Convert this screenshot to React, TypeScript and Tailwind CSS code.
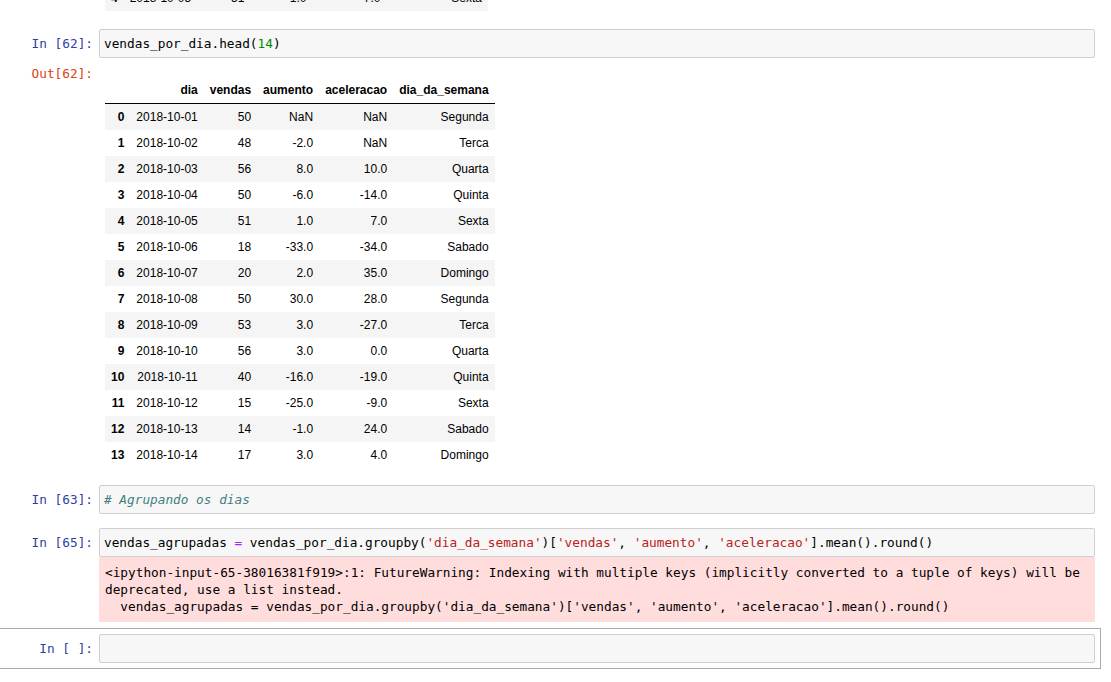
type Row = [number, string, number, string, string, string]

const rows: Row[] = [
  [0, "2018-10-01", 50, "NaN", "NaN", "Segunda"],
  [1, "2018-10-02", 48, "-2.0", "NaN", "Terca"],
  [2, "2018-10-03", 56, "8.0", "10.0", "Quarta"],
  [3, "2018-10-04", 50, "-6.0", "-14.0", "Quinta"],
  [4, "2018-10-05", 51, "1.0", "7.0", "Sexta"],
  [5, "2018-10-06", 18, "-33.0", "-34.0", "Sabado"],
  [6, "2018-10-07", 20, "2.0", "35.0", "Domingo"],
  [7, "2018-10-08", 50, "30.0", "28.0", "Segunda"],
  [8, "2018-10-09", 53, "3.0", "-27.0", "Terca"],
  [9, "2018-10-10", 56, "3.0", "0.0", "Quarta"],
  [10, "2018-10-11", 40, "-16.0", "-19.0", "Quinta"],
  [11, "2018-10-12", 15, "-25.0", "-9.0", "Sexta"],
  [12, "2018-10-13", 14, "-1.0", "24.0", "Sabado"],
  [13, "2018-10-14", 17, "3.0", "4.0", "Domingo"],
]

const cols = ["dia", "vendas", "aumento", "aceleracao", "dia_da_semana"]

const mono = "font-['DejaVu_Sans_Mono',monospace] text-[12.75px] leading-[17px]"

function DataFrame({ data }: { data: Row[] }) {
  return (
    <table className="border-collapse font-['Liberation_Sans',Arial,sans-serif] text-[12px] leading-[14px] text-black">
      <thead className="border-b border-black">
        <tr className="text-right">
          <th className="px-[6px] py-[6px]"></th>
          {cols.map((c) => (
            <th key={c} className="px-[6px] py-[6px] font-bold">{c}</th>
          ))}
        </tr>
      </thead>
      <tbody>
        {data.map((r) => (
          <tr key={r[0]} className="odd:bg-[#f5f5f5]">
            <th className="px-[6px] py-[6px] text-right font-bold">{r[0]}</th>
            {r.slice(1).map((v, i) => (
              <td key={i} className="px-[6px] py-[6px] text-right">{v}</td>
            ))}
          </tr>
        ))}
      </tbody>
    </table>
  )
}

function Prompt({ label, out }: { label: string; out?: boolean }) {
  return (
    <div className={`w-[99px] shrink-0 pr-[6px] text-right ${mono} ${out ? "text-[#D84315]" : "text-[#303F9F]"}`}>
      {label}
    </div>
  )
}

function InputBox({ children }: { children?: React.ReactNode }) {
  return (
    <div className={`flex-1 h-[29px] rounded-[2px] border border-[#cfcfcf] bg-[#f7f7f7] px-[4px] py-[5px] whitespace-pre text-black ${mono}`}>
      {children}
    </div>
  )
}

const S = ({ c }: { c: string }) => <span className="text-[#BA2121]">{c}</span>
const Op = ({ c }: { c: string }) => <span className="text-[#AA22FF]">{c}</span>

export default function App() {
  return (
    <div className="w-[1111px] h-[682px] overflow-hidden bg-white">
      {/* tail of the previous cell's output, scrolled mostly out of view */}
      <div className="flex h-[11px] flex-col items-start justify-end overflow-hidden pl-[105px]">
        <DataFrame data={rows.slice(0, 5)} />
      </div>

      {/* In [62] */}
      <div className="mt-[18px] mr-[16px] flex">
        <div className="pt-[6px]"><Prompt label="In [62]:" /></div>
        <InputBox>
          vendas_por_dia.head(<span className="text-[#008800]">14</span>)
        </InputBox>
      </div>
      <div className="mr-[16px] flex">
        <div className="pt-[7px]"><Prompt label="Out[62]:" out /></div>
        <div className="pl-[6px] pt-[19px]">
          <DataFrame data={rows} />
        </div>
      </div>

      {/* In [63] */}
      <div className="mt-[17px] mr-[16px] flex">
        <div className="pt-[6px]"><Prompt label="In [63]:" /></div>
        <InputBox>
          <span className="italic text-[#408080]"># Agrupando os dias</span>
        </InputBox>
      </div>

      {/* In [65] */}
      <div className="mt-[14px] mr-[16px] flex">
        <div className="pt-[6px]"><Prompt label="In [65]:" /></div>
        <InputBox>
          vendas_agrupadas <Op c="=" /> vendas_por_dia.groupby(<S c="'dia_da_semana'" />)[<S c="'vendas'" />, <S c="'aumento'" />, <S c="'aceleracao'" />].mean().round()
        </InputBox>
      </div>
      <div className="mr-[16px] flex">
        <div className="w-[99px] shrink-0"></div>
        <div className={`flex-1 bg-[#ffdddd] px-[6px] pt-[7px] pb-[7px] whitespace-pre text-black ${mono}`}>
          {"<ipython-input-65-38016381f919>:1: FutureWarning: Indexing with multiple keys (implicitly converted to a tuple of keys) will be\ndeprecated, use a list instead.\n  vendas_agrupadas = vendas_por_dia.groupby('dia_da_semana')['vendas', 'aumento', 'aceleracao'].mean().round()"}
        </div>
      </div>

      {/* In [ ] selected */}
      <div className="mt-[6px] mr-[10px] border border-l-0 border-[#ababab] py-[5px] pr-[5px]">
        <div className="flex">
          <div className="pt-[6px]"><Prompt label="In [ ]:" /></div>
          <InputBox />
        </div>
      </div>
    </div>
  )
}
